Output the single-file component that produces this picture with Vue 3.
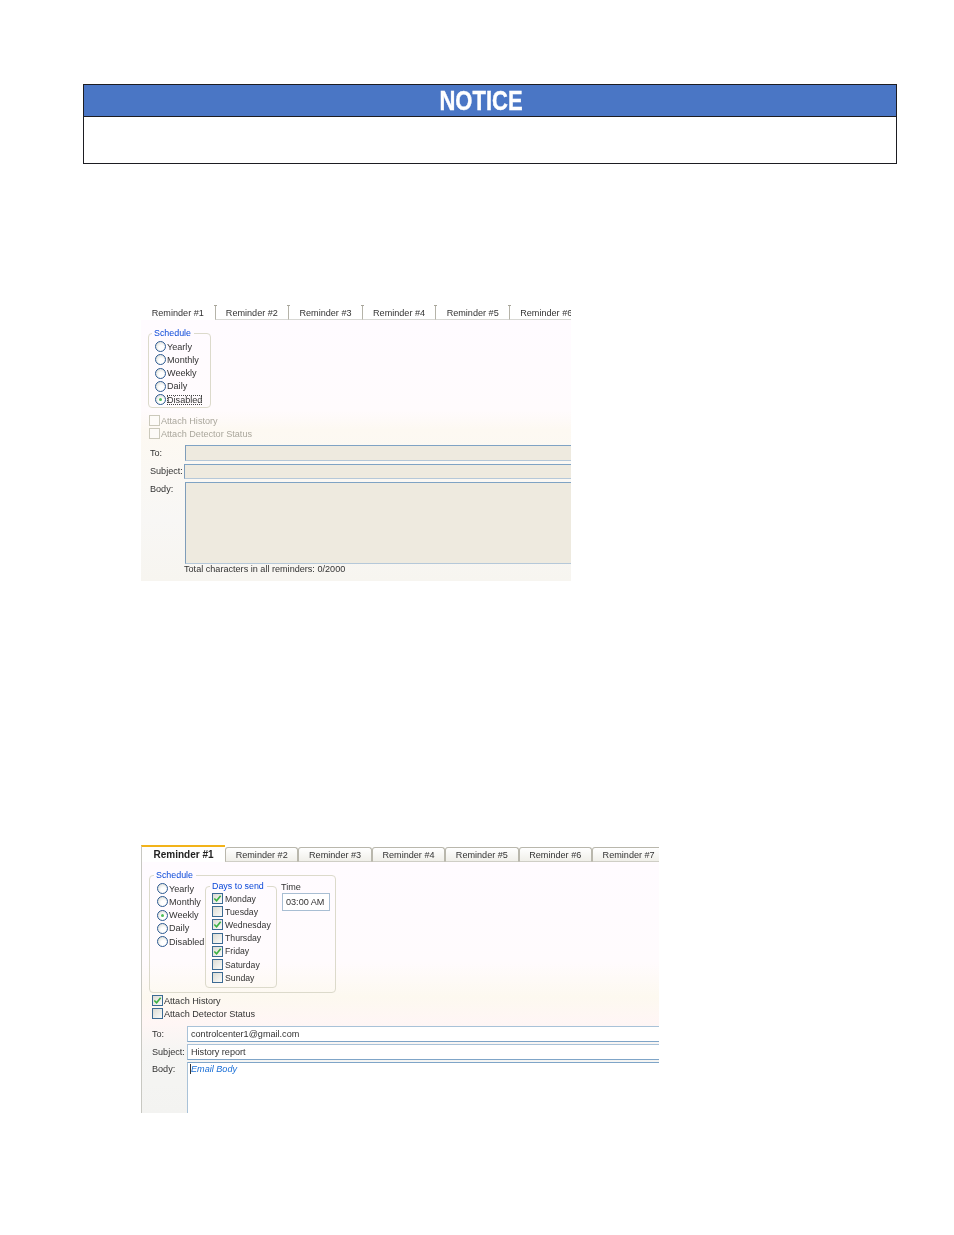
<script setup>
const tabsA = ['Reminder #2', 'Reminder #3', 'Reminder #4', 'Reminder #5', 'Reminder #6']
const tabsB = ['Reminder #2', 'Reminder #3', 'Reminder #4', 'Reminder #5', 'Reminder #6', 'Reminder #7']
const schedule = ['Yearly', 'Monthly', 'Weekly', 'Daily', 'Disabled']
const days = [
  { n: 'Monday', on: true }, { n: 'Tuesday', on: false }, { n: 'Wednesday', on: true },
  { n: 'Thursday', on: false }, { n: 'Friday', on: true }, { n: 'Saturday', on: false }, { n: 'Sunday', on: false }
]
</script>

<template>
  <div class="page">
    <section class="notice">
      <h1 class="notice-head"><span>NOTICE</span></h1>
      <div class="notice-body"></div>
    </section>

    <div class="shot shot-a">
      <div class="tabs-a">
        <div class="tab-a first">Reminder #1</div>
        <div v-for="t in tabsA" :key="t" class="tab-a">{{ t }}</div>
      </div>
      <div class="panel-a">
        <fieldset class="group group-a">
          <legend>Schedule</legend>
          <div v-for="s in schedule" :key="s" class="opt">
            <i class="radio" :class="{ on: s === 'Disabled' }"></i>
            <span :class="{ focus: s === 'Disabled' }">{{ s }}</span>
          </div>
        </fieldset>
        <div class="checks-a">
          <div class="opt off"><i class="box off-box"></i><span>Attach History</span></div>
          <div class="opt off"><i class="box off-box"></i><span>Attach Detector Status</span></div>
        </div>
        <div class="form-a">
          <label>To:</label><div class="field f-to"></div>
          <label class="tight">Subject:</label><div class="field f-subject"></div>
          <label class="tight">Body:</label><div class="field f-body"></div>
          <span></span><div class="total">Total characters in all reminders: 0/2000</div>
        </div>
      </div>
    </div>

    <div class="shot shot-b">
      <div class="tabs-b">
        <div class="tab-b first">Reminder #1</div>
        <div v-for="t in tabsB" :key="t" class="tab-b">{{ t }}</div>
      </div>
      <div class="panel-b">
        <fieldset class="group group-b">
          <legend>Schedule</legend>
          <div class="sched-row">
            <div class="col-radios">
              <div v-for="s in schedule" :key="s" class="opt">
                <i class="radio" :class="{ on: s === 'Weekly' }"></i><span>{{ s }}</span>
              </div>
            </div>
            <fieldset class="group group-days">
              <legend>Days to send</legend>
              <div v-for="d in days" :key="d.n" class="opt">
                <i class="box">
                  <svg v-if="d.on" viewBox="0 0 10 10" width="9" height="9"><path d="M1.5 5 L4 7.5 L8.5 2" fill="none" stroke="#3bb043" stroke-width="1.8"/></svg>
                </i>
                <span>{{ d.n }}</span>
              </div>
            </fieldset>
            <div class="time">
              <div class="time-label">Time</div>
              <div class="time-field">03:00 AM</div>
            </div>
          </div>
        </fieldset>
        <div class="checks-b">
          <div class="opt">
            <i class="box"><svg viewBox="0 0 10 10" width="9" height="9"><path d="M1.5 5 L4 7.5 L8.5 2" fill="none" stroke="#3bb043" stroke-width="1.8"/></svg></i>
            <span>Attach History</span>
          </div>
          <div class="opt"><i class="box"></i><span>Attach Detector Status</span></div>
        </div>
        <div class="form-b">
          <label>To:</label><div class="field-b">controlcenter1@gmail.com</div>
          <label>Subject:</label><div class="field-b">History report</div>
          <label class="body-label">Body:</label><div class="field-b body-b"><em>Email Body</em></div>
        </div>
      </div>
    </div>
  </div>
</template>

<style>
html, body { margin: 0; background: #fff; }
</style>

<style scoped>
.page {
  width: 954px;
  height: 1235px;
  box-sizing: border-box;
  padding: 84px 57px 0 83px;
  font-family: "Liberation Sans", Arial, sans-serif;
  overflow: hidden;
}
.notice { border: 1px solid #1d1d22; height: 80px; box-sizing: border-box; }
.notice-head {
  margin: 0;
  height: 32px;
  box-sizing: border-box;
  padding-right: 17px;
  background: #4a76c5;
  border-bottom: 1px solid #1d1d22;
  text-align: center;
  color: #fff;
  font-size: 27px;
  line-height: 33px;
  font-weight: 700;
}
.notice-head span { display: inline-block; transform: scaleX(.815); -webkit-text-stroke: .4px #fff; }

.shot { font-size: 9.1px; color: #333; filter: blur(.3px); overflow: hidden; }
.shot-a { margin: 139px 0 0 58px; width: 430px; height: 278px; }
.shot-b { margin: 264px 0 0 58px; width: 518px; height: 268px; }

.tabs-a { display: flex; height: 17px; }
.tab-a {
  position: relative;
  width: 73.6px;
  flex: none;
  box-sizing: border-box;
  text-align: center;
  white-space: nowrap;
  border-left: 1px solid #b5b3a8;
  border-bottom: 1px solid #d8d8d4;
  margin-top: 2px;
  height: 15px;
  line-height: 11px;
  padding-top: 3px;
}
.tab-a:not(.first)::before {
  content: "";
  position: absolute;
  left: -2px;
  top: 0;
  width: 3px;
  height: 1px;
  background: #a8a69b;
}
.tab-a.first { border-left: 0; border-bottom: 0; }

.panel-a {
  height: 261px;
  box-sizing: border-box;
  padding: 7px 0 0 7px;
  background: linear-gradient(#fffbff 0, #fffbfd 90px, #fdf9f2 110px, #f8f7f5 200px, #f7f5f0 100%);
}
.group {
  margin: 0;
  padding: 0;
  border: 1px solid #dcdacb;
  border-radius: 4px;
  min-width: 0;
}
legend { color: #0a48d8; padding: 0 3px 0 2px; font-size: 8.9px; line-height: 12px; }
.group-a { width: 63px; height: 81px; box-sizing: border-box; padding: 1px 0 0 6px; }
.group-a > legend { margin-left: -3px; }
.opt { display: flex; align-items: center; height: 13.25px; white-space: nowrap; }
.opt span { margin-left: 1px; }
.radio {
  width: 11px;
  height: 11px;
  box-sizing: border-box;
  flex: none;
  border: 1px solid #2c5a92;
  border-radius: 50%;
  background: radial-gradient(circle at 60% 65%, #fff 30%, #d4d4cc 100%);
  position: relative;
}
.radio.on::after {
  content: "";
  position: absolute;
  left: 3px;
  top: 3px;
  width: 3px;
  height: 3px;
  border-radius: 50%;
  background: #4fbf5a;
}
.focus { outline: 1px dotted #444; outline-offset: -1px; }
.box {
  width: 11px;
  height: 11px;
  box-sizing: border-box;
  flex: none;
  border: 1px solid #3b6a93;
  background: linear-gradient(135deg, #dcdcd4, #fbfbf9);
  display: flex;
  align-items: center;
  justify-content: center;
}
.off-box { border-color: #cbc9bb; background: #fdfbf8; }
.off { color: #aaa79c; }
.checks-a { margin: 6px 0 0 1px; }
.form-a {
  display: grid;
  grid-template-columns: 35px 1fr;
  margin: 4px 0 0 2px;
  row-gap: 3px;
  align-items: start;
}
.form-a label { padding-top: 2px; line-height: 12px; }
.form-a .tight { padding-top: 1px; }
.field {
  background: #eeeadf;
  border-top: 1px solid #7fa3c4;
  border-bottom: 1px solid #b5c8d9;
  border-left: 1px solid #7f9db9;
  box-sizing: border-box;
}
.f-to { height: 16px; }
.f-subject { height: 15px; margin-left: -1px; }
.f-body { height: 82px; margin-bottom: -4px; }
.total { line-height: 12px; margin-left: -1px; }

.tabs-b { display: flex; height: 17px; align-items: flex-end; }
.tab-b {
  flex: none;
  width: 73.4px;
  height: 15px;
  box-sizing: border-box;
  border: 1px solid #b9b7ac;
  border-bottom-color: #cfcec6;
  border-radius: 3px 3px 0 0;
  background: linear-gradient(#fff, #f0efe9);
  text-align: center;
  line-height: 14px;
  white-space: nowrap;
}
.tab-b.first {
  width: 84px;
  height: 17px;
  border: 0;
  border-left: 1px solid #c8c8c2;
  border-top: 2px solid #f2b319;
  border-radius: 0;
  background: #fff;
  font-size: 10px;
  font-weight: 700;
  color: #222;
  line-height: 16px;
}
.panel-b {
  height: 251px;
  box-sizing: border-box;
  padding: 7px 0 0 7px;
  border-left: 1px solid #c8c8c2;
  background: linear-gradient(#fffbff 0, #fffbfd 100px, #fdf9f0 135px, #fff6f5 160px, #f5f5f3 190px, #f3f3f1 100%);
}
.group-b { width: 187px; height: 124px; box-sizing: border-box; padding: 0 0 0 7px; }
.group-b > legend { margin-left: -3px; }
.sched-row { display: flex; align-items: flex-start; }
.col-radios { width: 48px; flex: none; padding-top: 1px; }
.col-radios .opt span { margin-left: 1px; }
.group-days { width: 72px; height: 108px; box-sizing: border-box; flex: none; padding: 0 0 0 6px; margin-top: -1px; }
.group-days > legend { margin-left: -2px; }
.group-days .opt { height: 13.2px; font-size: 8.7px; }
.group-days .opt span { margin-left: 2px; }
.time { margin-left: 4px; }
.time-label { line-height: 12px; }
.time-field {
  margin-left: 1px;
  width: 48px;
  height: 18px;
  box-sizing: border-box;
  border: 1px solid #a8bed3;
  background: #fff;
  line-height: 16px;
  padding-left: 3px;
}
.checks-b { margin: 1px 0 0 3px; }
.checks-b .opt { height: 13.25px; }
.checks-b .opt span { margin-left: 1px; }
.form-b {
  display: grid;
  grid-template-columns: 35px 1fr;
  margin: 5px 0 0 3px;
  row-gap: 2px;
  align-items: start;
}
.form-b label { line-height: 16px; }
.form-b .body-label { line-height: 14px; }
.field-b {
  height: 16px;
  box-sizing: border-box;
  background: #fff;
  border-top: 1px solid #a9c2d8;
  border-left: 1px solid #a9c2d8;
  border-bottom: 1px solid #7fa5c8;
  padding-left: 3px;
  line-height: 14px;
}
.body-b {
  height: 51px;
  border-bottom: 0;
  border-top: 1px solid #7fa5c8;
  color: #1a6fd6;
  line-height: 12px;
}
.body-b em { border-left: 1px solid #333; margin-left: -1px; }
</style>
